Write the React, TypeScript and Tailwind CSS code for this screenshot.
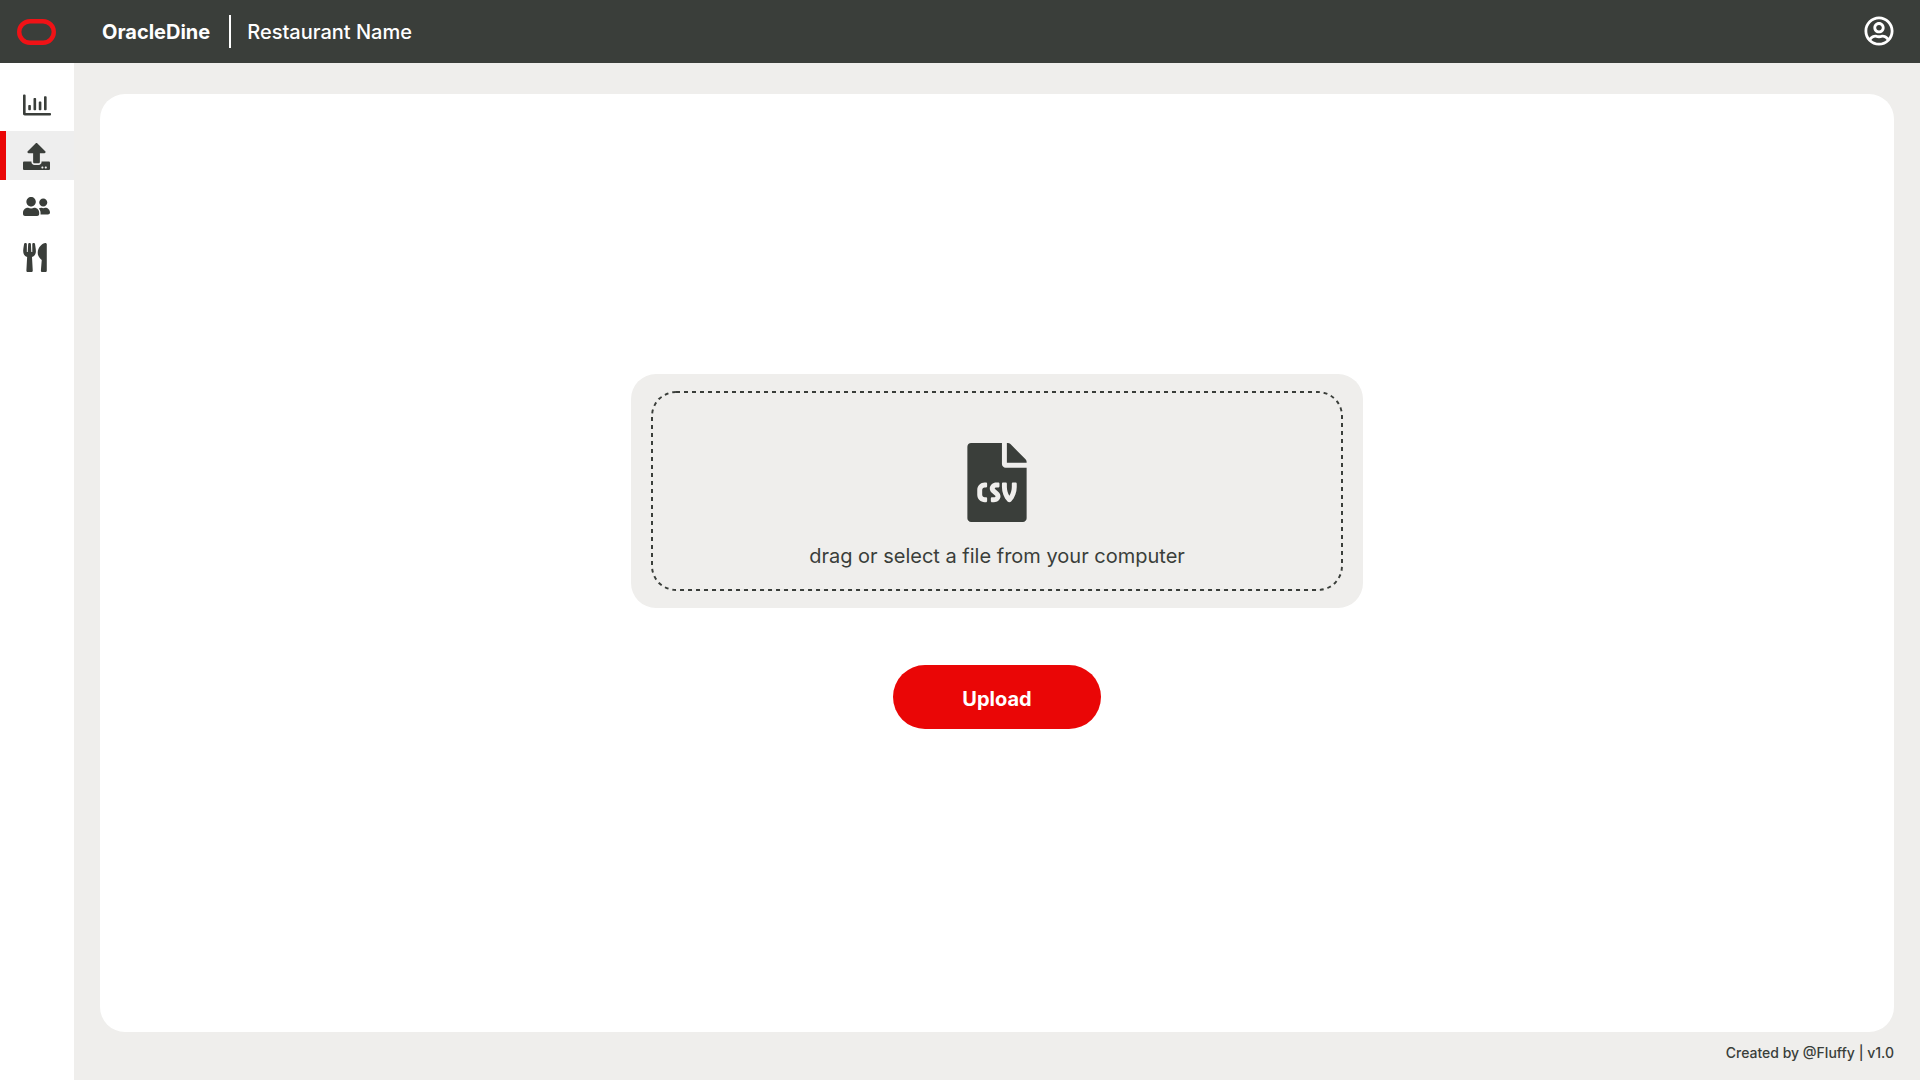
import React from "react";
import {
  FaFileCsv,
  FaRegChartBar,
  FaRegUserCircle,
  FaUpload,
  FaUserFriends,
  FaUtensils,
} from "react-icons/fa";

type NavItem = {
  label: string;
  icon: React.ReactNode;
  active?: boolean;
};

const navItems: NavItem[] = [
  { label: "Dashboard", icon: <FaRegChartBar className="size-7" /> },
  { label: "Upload data", icon: <FaUpload className="size-[27px]" />, active: true },
  { label: "Staff", icon: <FaUserFriends className="size-[27px]" /> },
  { label: "Menu", icon: <FaUtensils className="h-[29px] w-6" /> },
];

function Header() {
  return (
    <header className="flex h-[63px] shrink-0 items-center bg-[#3a3e3a] pr-[26px] text-white">
      <a href="#home" aria-label="Home" className="flex w-[74px] shrink-0 pl-[17px]">
        <svg viewBox="0 0 39 26" className="h-[26px] w-[39px]" fill="none" aria-hidden="true">
          <rect x="2.2" y="2.2" width="34.6" height="21.6" rx="10.8" stroke="#f01216" strokeWidth="4.4" />
        </svg>
      </a>
      <div className="flex flex-1 items-center pl-7 text-xl">
        <span className="font-bold">OracleDine</span>
        <span className="ml-[19px] mr-4 h-[33px] w-0.5 bg-white" />
        <span className="font-medium">Restaurant Name</span>
      </div>
      <button type="button" aria-label="Account" className="pb-px">
        <FaRegUserCircle className="size-[30px]" />
      </button>
    </header>
  );
}

function Sidebar() {
  return (
    <nav className="flex w-[74px] shrink-0 flex-col gap-0.5 bg-white pt-[17px]">
      {navItems.map((item) => (
        <a
          key={item.label}
          href="#"
          aria-label={item.label}
          aria-current={item.active ? "page" : undefined}
          className={
            item.active
              ? "flex h-[49px] items-center border-l-6 border-[#ea0606] bg-[#eeeeee] pt-px pl-[17px]"
              : "flex h-[49px] items-center border-l-6 border-transparent pl-[17px]"
          }
        >
          {item.icon}
        </a>
      ))}
    </nav>
  );
}

function DashedOutline() {
  return (
    <svg className="pointer-events-none absolute inset-0 size-full overflow-hidden rounded-[25px]" aria-hidden="true">
      <rect
        width="100%"
        height="100%"
        rx="25"
        fill="none"
        stroke="#3a3e3a"
        strokeWidth="4"
        strokeDasharray="4 4"
      />
    </svg>
  );
}

export default function App() {
  return (
    <div className="flex min-h-screen flex-col bg-[#efeeec] font-['Inter',sans-serif] text-[#3a3e3a]">
      <Header />
      <div className="flex flex-1">
        <Sidebar />
        <div className="flex flex-1 flex-col px-[26px] pt-[31px]">
          <main className="flex flex-1 flex-col items-center justify-center rounded-[25px] bg-white pb-6">
            <div className="w-full max-w-[732px] rounded-[25px] bg-[#efeeec] px-5 py-[17px]">
              <label className="relative flex h-[200px] cursor-pointer flex-col items-center pt-[52px]">
                <DashedOutline />
                <input type="file" accept=".csv" className="sr-only" />
                <FaFileCsv className="h-[79px] w-[60px]" />
                <span className="mt-5 text-xl">drag or select a file from your computer</span>
              </label>
            </div>
            <button
              type="button"
              className="mt-[57px] h-16 w-52 rounded-full bg-[#ea0606] pt-1 text-xl font-bold text-white"
            >
              Upload
            </button>
          </main>
          <footer className="flex h-12 items-center justify-end pb-1.5 text-sm font-medium">
            Created by @Fluffy | v1.0
          </footer>
        </div>
      </div>
    </div>
  );
}
